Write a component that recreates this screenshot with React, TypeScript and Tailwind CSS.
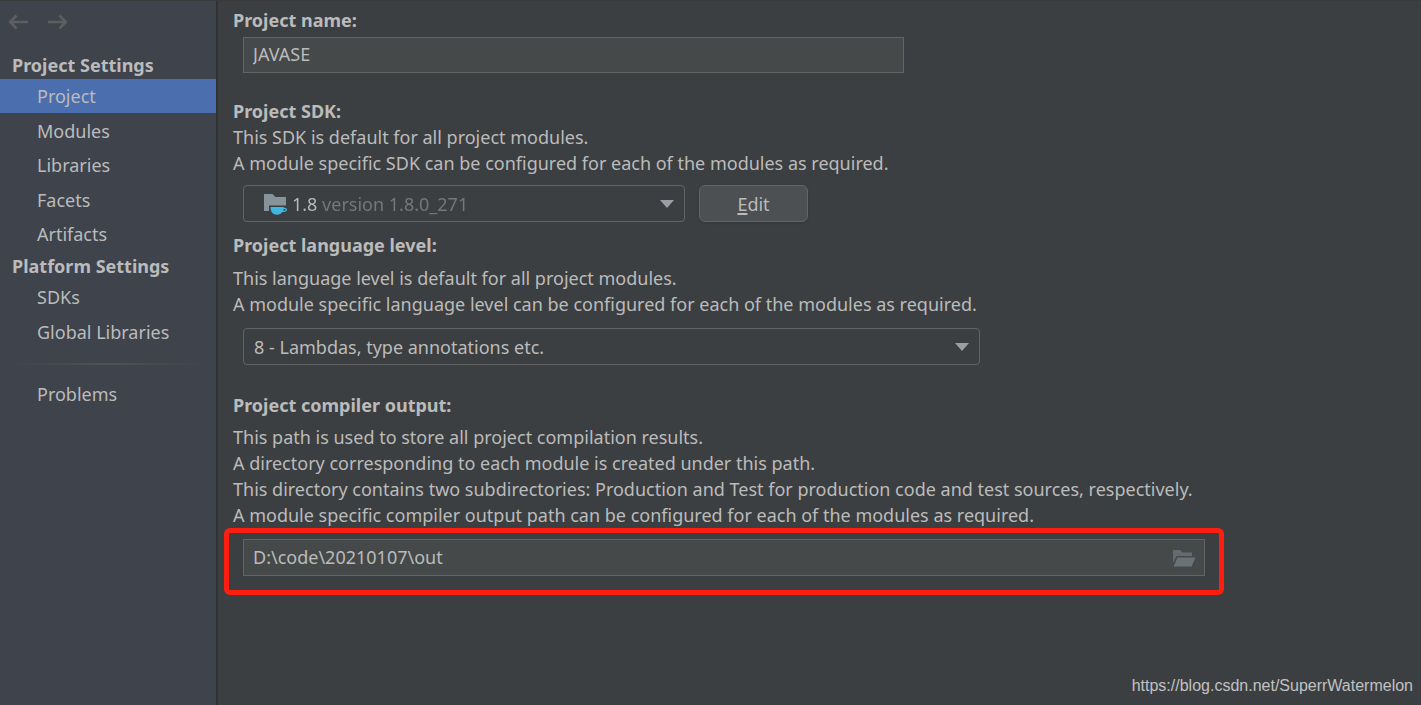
import type { ReactNode } from 'react';
import clsx from 'clsx';

const projectItems = ['Project', 'Modules', 'Libraries', 'Facets', 'Artifacts'];
const platformItems = ['SDKs', 'Global Libraries'];

function ArrowIcon({ flipped }: { flipped?: boolean }) {
    return (
        <svg
            className={clsx('h-4 w-5', flipped && '-scale-x-100')}
            viewBox="0 0 20 16"
            fill="none"
            stroke="#5d5e5e"
            strokeWidth="2.6"
        >
            <path d="M20 8H2M8.500 1.500 2.200 8l6.300 6.500" />
        </svg>
    );
}

function SdkIcon() {
    return (
        <svg className="h-6 w-6" viewBox="0 0 24 24">
            <path d="M0 2h8.500l3 3H22v8.500H5V19H0z" fill="#87939a" />
            <path
                d="M6.500 15h13.200v.7h.8c1.500 0 2.500.8 2.500 2s-1.200 2.300-3.300 2.300h-1.400c-1.200 1.900-3 2.700-5.300 2.700-3.900 0-6.500-2.700-6.500-7.700zm12.900 3.700h.7c1 0 1.600-.4 1.600-.9s-.5-.8-1.200-.8h-.8z"
                fill="#40b6e0"
            />
        </svg>
    );
}

function FolderIcon() {
    return (
        <svg className="h-[18px] w-6" viewBox="0 0 24 18">
            <path d="M1 1h7l2.500 2.500H20V7H4.500L1 14z" fill="#646b70" />
            <path d="M5.500 8.500H23.500L19.500 17.500H1.500z" fill="#6b7276" />
        </svg>
    );
}

function ComboArrow() {
    return (
        <svg
            className="pointer-events-none col-start-1 row-start-1 mr-2.5 h-2 w-3.5 justify-self-end"
            viewBox="0 0 14 8"
        >
            <path d="M0 0h14L7 8z" fill="#9b9fa3" />
        </svg>
    );
}

function NavItem({ label, selected }: { label: string; selected?: boolean }) {
    return (
        <li className="odd:mb-px last:mb-0">
            <button
                type="button"
                className={clsx('flex h-[34px] w-full items-center pl-[37px] text-left', selected && 'bg-[#4b6eaf]')}
            >
                {label}
            </button>
        </li>
    );
}

function NavHeading({ children }: { children: ReactNode }) {
    return <h2 className="flex h-7 items-center pl-3 font-bold">{children}</h2>;
}

export default function App() {
    return (
        <div className="flex min-h-screen border-t border-[#37393b] bg-[#3c3f41] font-['Noto_Sans',sans-serif] text-[18px] leading-[26px] text-[#bbbbbb]">
            {/* Sidebar */}
            <nav className="w-[218px] shrink-0 border-r-2 border-[#323232] bg-[#3e434c]">
                <div className="flex h-[50px] items-start gap-5 px-2 pt-[13px]">
                    <button type="button" aria-label="Back">
                        <ArrowIcon />
                    </button>
                    <button type="button" aria-label="Forward">
                        <ArrowIcon flipped />
                    </button>
                </div>
                <NavHeading>Project Settings</NavHeading>
                <ul>
                    {projectItems.map((item) => (
                        <NavItem key={item} label={item} selected={item === 'Project'} />
                    ))}
                </ul>
                <NavHeading>Platform Settings</NavHeading>
                <ul>
                    {platformItems.map((item) => (
                        <NavItem key={item} label={item} />
                    ))}
                </ul>
                <div className="mx-2 mt-3.5 mb-3 h-0.5 bg-linear-to-r from-transparent via-[#515151] to-transparent" />
                <ul>
                    <NavItem label="Problems" />
                </ul>
            </nav>

            {/* Project page */}
            <main className="flex min-w-0 flex-1 flex-col pt-1.5 pl-[15px]">
                <label htmlFor="name" className="font-bold">Project name:</label>
                <input
                    id="name"
                    defaultValue="JAVASE"
                    className="mt-1 ml-2.5 h-9 w-[661px] max-w-full border border-[#646464] bg-[#45494a] px-[9px] pb-0.5"
                />

                <label htmlFor="sdk" className="mt-[25px] font-bold">Project SDK:</label>
                <p>This SDK is default for all project modules.</p>
                <p>A module specific SDK can be configured for each of the modules as required.</p>
                <div className="mt-[9px] ml-2.5 flex gap-3.5">
                    <div className="grid h-[37px] w-[442px] items-center rounded border border-[#646464]">
                        <select
                            id="sdk"
                            className="col-start-1 row-start-1 h-full appearance-none bg-linear-to-r from-[#bbbbbb] from-[75px] to-[#777777] to-[75px] bg-clip-text pl-12 text-transparent"
                        >
                            <option>1.8 version 1.8.0_271</option>
                        </select>
                        <div className="pointer-events-none col-start-1 row-start-1 ml-5">
                            <SdkIcon />
                        </div>
                        <ComboArrow />
                    </div>
                    <button
                        type="button"
                        className="h-[37px] w-[109px] rounded-md border border-[#646464] bg-[#4c5052] shadow-sm"
                    >
                        <span className="underline decoration-2 underline-offset-2">E</span>dit
                    </button>
                </div>

                <label htmlFor="level" className="mt-2.5 font-bold">Project language level:</label>
                <p className="mt-[7px]">This language level is default for all project modules.</p>
                <p>A module specific language level can be configured for each of the modules as required.</p>
                <div className="mt-[11px] ml-2.5 grid h-[37px] w-[737px] max-w-full items-center rounded border border-[#646464]">
                    <select id="level" className="col-start-1 row-start-1 h-full appearance-none bg-transparent pl-2.5">
                        <option>8 - Lambdas, type annotations etc.</option>
                    </select>
                    <ComboArrow />
                </div>

                <label htmlFor="output" className="mt-[27px] font-bold">Project compiler output:</label>
                <p className="mt-1.5">This path is used to store all project compilation results.</p>
                <p>A directory corresponding to each module is created under this path.</p>
                <p>This directory contains two subdirectories: Production and Test for production code and test sources, respectively.</p>
                <p>A module specific compiler output path can be configured for each of the modules as required.</p>
                <div className="-ml-[9px] w-[1000px] max-w-full rounded-md border-5 border-[#ff1e10] px-3.5 pt-1.5 pb-3.5">
                    <div className="flex h-[37px] items-center border border-[#646464] bg-[#45494a] pr-2">
                        <input id="output" defaultValue="D:\code\20210107\out" className="min-w-0 flex-1 px-[9px] pb-0.5" />
                        <button type="button" aria-label="Browse">
                            <FolderIcon />
                        </button>
                    </div>
                </div>

                <footer className="mt-auto self-end pr-2 pb-1.5 font-['Liberation_Sans',sans-serif] text-[16px] text-[#c0c1c2]">
                    https://blog.csdn.net/SuperrWatermelon
                </footer>
            </main>
        </div>
    );
}
